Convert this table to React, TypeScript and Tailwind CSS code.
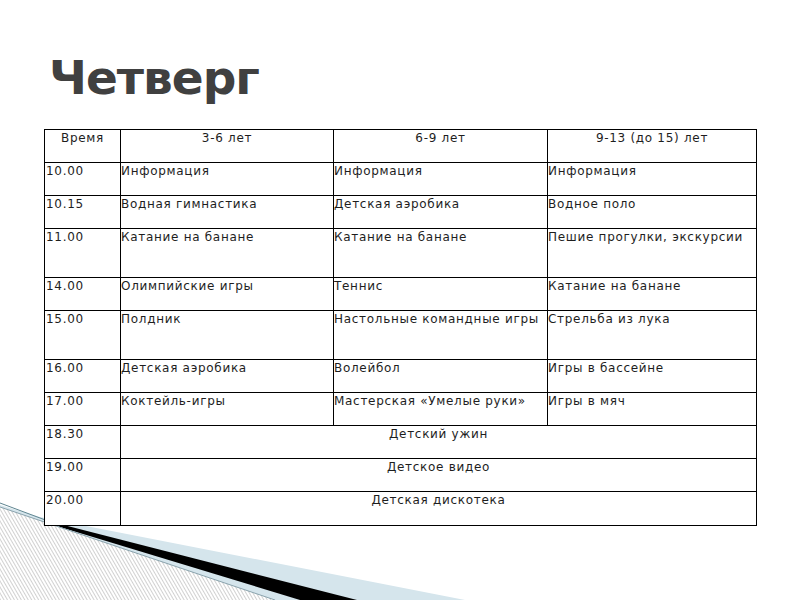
import React from "react";

type Row = { time: string; cells: string[]; h: string };

const rows: Row[] = [
  { time: "10.00", cells: ["Информация", "Информация", "Информация"], h: "h-[33px]" },
  { time: "10.15", cells: ["Водная гимнастика", "Детская аэробика", "Водное поло"], h: "h-[33px]" },
  { time: "11.00", cells: ["Катание на банане", "Катание на банане", "Пешие прогулки, экскурсии"], h: "h-[49px]" },
  { time: "14.00", cells: ["Олимпийские игры", "Теннис", "Катание на банане"], h: "h-[33px]" },
  { time: "15.00", cells: ["Полдник", "Настольные командные игры", "Стрельба из лука"], h: "h-[49px]" },
  { time: "16.00", cells: ["Детская аэробика", "Волейбол", "Игры в бассейне"], h: "h-[33px]" },
  { time: "17.00", cells: ["Коктейль-игры", "Мастерская «Умелые руки»", "Игры в мяч"], h: "h-[33px]" },
  { time: "18.30", cells: ["Детский ужин"], h: "h-[33px]" },
  { time: "19.00", cells: ["Детское видео"], h: "h-[33px]" },
  { time: "20.00", cells: ["Детская дискотека"], h: "h-[34px]" },
];

const cell = "border-r border-b border-black pt-[1px] leading-[14px] whitespace-nowrap overflow-hidden";

function Decoration() {
  return (
    <svg
      className="absolute left-0 top-[490px] pointer-events-none"
      width="480"
      height="110"
      viewBox="0 490 480 110"
    >
      <defs>
        <pattern id="hatch" width="3" height="3" patternUnits="userSpaceOnUse" patternTransform="rotate(-30)">
          <rect width="3" height="3" fill="#ffffff" />
          <line x1="0" y1="0" x2="0" y2="3" stroke="#9a9a9a" strokeWidth="0.9" />
        </pattern>
      </defs>
      <polygon points="40,517 465,600 0,600 0,505" fill="#d5e5ec" />
      <polygon points="48,521 357,600 300,600 60,527" fill="#000000" />
      <polygon points="0,507 275,600 0,600" fill="url(#hatch)" />
      <line x1="0" y1="507" x2="275" y2="600" stroke="#8aa3ad" strokeWidth="1" />
      <line x1="0" y1="503" x2="48" y2="521" stroke="#5f8590" strokeWidth="1" />
    </svg>
  );
}

export default function App() {
  return (
    <div className="relative w-[800px] h-[600px] overflow-hidden bg-white">
      <Decoration />
      <div className="relative flex flex-col">
        <h1
          className="mt-[54px] ml-[49px] h-[48px] text-[47px] leading-[48px] tracking-[-1px] font-bold text-[#404040]"
          style={{ fontFamily: '"DejaVu Sans", sans-serif' }}
        >
          Четверг
        </h1>
        <div
          className="mt-[27px] ml-[44px] w-[713px] grid grid-cols-[76px_213px_214px_209px] border-l border-t border-black text-[12px] tracking-[0.7px] text-[#1e1e1e] bg-white"
          style={{ fontFamily: '"DejaVu Sans", sans-serif' }}
        >
          <div className={`${cell} h-[33px] text-center`}>Время</div>
          <div className={`${cell} h-[33px] text-center`}>3-6 лет</div>
          <div className={`${cell} h-[33px] text-center`}>6-9 лет</div>
          <div className={`${cell} h-[33px] text-center`}>9-13 (до 15) лет</div>
          {rows.map((r) => (
            <React.Fragment key={r.time}>
              <div className={`${cell} ${r.h} pl-px`}>{r.time}</div>
              {r.cells.length === 1 ? (
                <div className={`${cell} ${r.h} col-span-3 text-center`}>{r.cells[0]}</div>
              ) : (
                r.cells.map((c, i) => (
                  <div key={i} className={`${cell} ${r.h}`}>
                    {c}
                  </div>
                ))
              )}
            </React.Fragment>
          ))}
        </div>
      </div>
    </div>
  );
}
